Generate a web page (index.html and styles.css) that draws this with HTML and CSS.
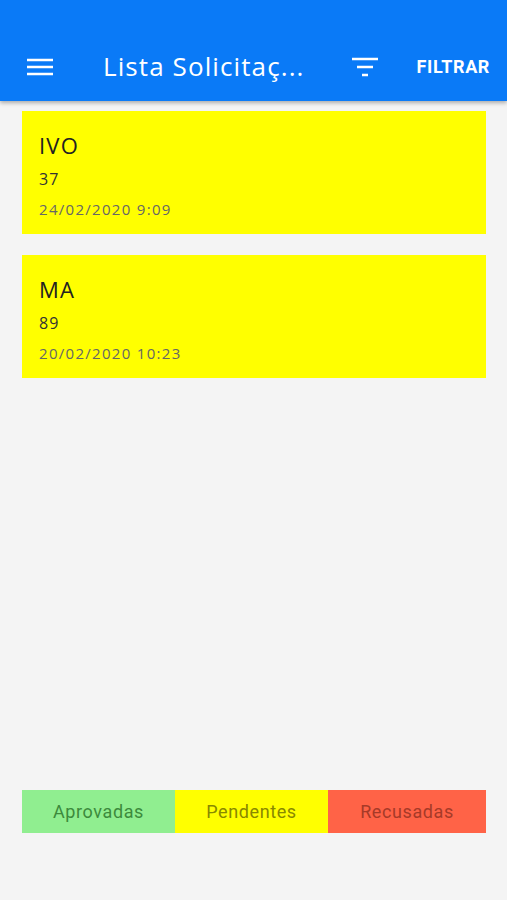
FILE: index.html
```html
<!DOCTYPE html>
<html lang="pt">
<head>
    <meta charset="UTF-8">
    <title>Lista Solicitações</title>
    <link rel="stylesheet" href="styles.css">
</head>
<body>
<div class="app">
    <header class="toolbar">
        <button class="menu-btn" aria-label="menu">
            <svg width="28" height="18" viewBox="0 0 28 18"><path d="M1 2h26M1 9h26M1 16h26" stroke="#fff" stroke-width="2.6" fill="none"/></svg>
        </button>
        <h1 class="title">Lista Solicitaç...</h1>
        <button class="filter-btn" aria-label="filtro">
            <svg width="26" height="20" viewBox="0 0 26 20"><path d="M0 2h26M5 10h16M10 18h6" stroke="#fff" stroke-width="2.6" fill="none"/></svg>
        </button>
        <span class="filtrar">FILTRAR</span>
    </header>

    <main class="lista">
        <div class="card">
            <div class="nome">IVO</div>
            <div class="numero">37</div>
            <div class="data">24/02/2020 9:09</div>
        </div>
        <div class="card">
            <div class="nome">MA</div>
            <div class="numero">89</div>
            <div class="data">20/02/2020 10:23</div>
        </div>
    </main>

    <footer class="legenda">
        <div class="item aprovadas">Aprovadas</div>
        <div class="item pendentes">Pendentes</div>
        <div class="item recusadas">Recusadas</div>
    </footer>
</div>
</body>
</html>
```

FILE: styles.css
```css
html,body{margin:0;padding:0;}
body{background:#f4f4f4;font-family:"Open Sans","DejaVu Sans",sans-serif;}
.app{
    height:900px;
    display:flex;
    flex-direction:column;
}
.toolbar{
    height:101px;
    background:#0a7af7;
    display:flex;
    align-items:flex-end;
    padding:0 17px 20px 26px;
    box-sizing:border-box;
    box-shadow:0 2px 4px rgba(0,0,0,0.3);
    color:#fff;
}
.menu-btn,.filter-btn{
    background:none;
    border:0;
    padding:0;
    display:flex;
}
.menu-btn{margin-bottom:5px;}
.filter-btn{margin-bottom:4px;margin-left:auto;}
.title{
    margin:0 0 0 49px;
    font-size:26px;
    font-weight:normal;
    letter-spacing:1.1px;
    line-height:30px;
}
.filtrar{
    margin-left:39px;
    font-family:"Roboto",sans-serif;
    font-weight:bold;
    font-size:18px;
    line-height:28px;
    letter-spacing:0.6px;
}
.lista{
    flex:1;
    padding:10px 21px 0 22px;
    display:flex;
    flex-direction:column;
    gap:21px;
}
.card{
    background:#ffff00;
    height:123px;
    padding:20px 17px 0;
    box-sizing:border-box;
}
.nome{
    font-size:22px;
    color:#222;
    line-height:28px;
    letter-spacing:1.2px;
}
.numero{
    font-size:16px;
    color:#333;
    margin-top:9px;
    line-height:22px;
    letter-spacing:1px;
}
.data{
    font-size:15px;
    color:#666;
    margin-top:9px;
    line-height:20px;
    letter-spacing:1.3px;
}
.legenda{
    display:flex;
    margin:0 21px 67px 22px;
    height:43px;
}
.item{
    flex:153;
    display:flex;
    align-items:center;
    justify-content:center;
    font-family:"Roboto",sans-serif;
    font-size:18px;
    letter-spacing:0.6px;
}
.aprovadas{background:#90ee90;color:#3c8a3c;}
.pendentes{background:#ffff00;color:#888800;}
.recusadas{background:#ff6347;color:#a63a28;flex:158;}
```
